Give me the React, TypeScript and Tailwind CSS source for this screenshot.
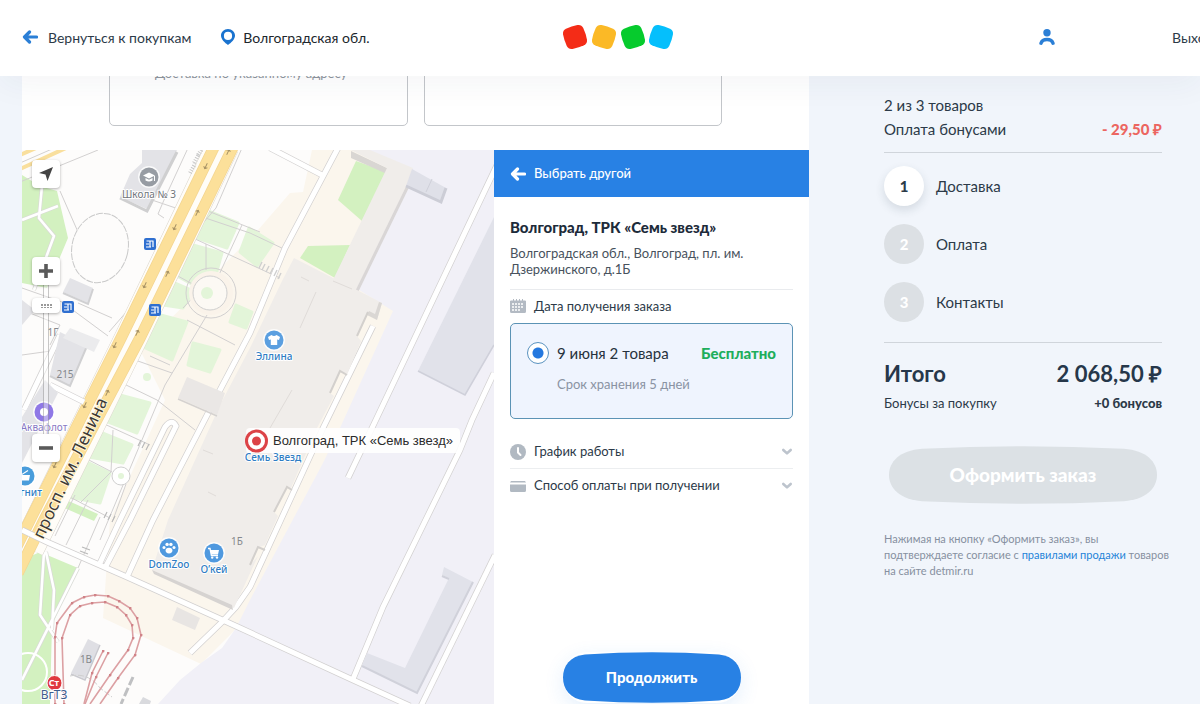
import { useState } from "react";
import type { ReactNode } from "react";

const BUILDING = "#f0edea";
const PARK = "#e3f5d9";
const GRASS = "#d3f1c0";
const BLOCK = "#e3e3e7";
const INDUSTRIAL = "#e1e2ea";

const logoTiles = [
  { x: 13, angle: -18, color: "#f42c17" },
  { x: 42, angle: 18, color: "#fbb926" },
  { x: 71, angle: -18, color: "#06cb2d" },
  { x: 99, angle: 18, color: "#05bffc" },
];

const parks = [
  "208,211 238,223 227,248 197,238",
  "249,228 273,243 257,266 240,252",
  "193,245 222,253 217,271 197,287 177,276",
  "170,281 193,291 183,308 163,305",
  "157,314 187,322 172,360 143,347",
  "193,343 220,350 210,372 188,365",
  "120,395 150,403 137,433 103,420",
  "95,430 132,445 123,463 83,456",
  "83,460 110,473 100,503 68,497",
  "236,305 252,312 246,328 230,322",
];

const roads = [
  "M497 165 L372 428 L348 478",
  "M494 373 L472 420 L460 450 L383 607 L353 679",
  "M495 555 L421 706",
  "M22 530 L47 542 L127 577 L227 622 L353 680 L410 706",
  "M338 148 L285 248 L250 333 L220 390 L153 520 L127 577",
  "M373 326 L323 428 L250 587 L236 607 L222 622 L190 653",
  "M100 563 L120 520 L165 427 Q172 418 176 426 L130 520 L106 566",
  "M270 148 L322 175",
  "M24 410 L60 335",
  "M50 385 L84 402",
];

const paths = [
  "M140 196 L250 233 L286 250",
  "M208 211 L260 232",
  "M193 238 L280 278",
  "M176 275 L198 287",
  "M183 308 L200 290",
  "M206 244 L206 270",
  "M218 277 L242 225",
  "M150 356 L170 365",
  "M135 360 L172 373",
  "M187 320 L235 345",
  "M122 383 L157 400 L195 430",
  "M207 315 L165 385 L100 540",
  "M100 422 L150 445",
  "M113 430 L111 472 L80 503",
  "M85 458 L112 472",
  "M66 495 L110 518",
  "M113 520 L126 484",
  "M188 148 L164 200 L158 214 L164 218",
  "M242 148 L216 208 L109 332",
  "M60 191 L78 232",
  "M22 288 L62 302 L108 336",
  "M22 310 L60 325 L50 345",
  "M78 303 L112 318",
  "M66 545 L88 500",
  "M55 536 L75 495",
  "M78 568 L100 517",
  "M22 355 L58 350",
];

const tramTracks = [
  "M55 704 L55 637 L57 623 L72 603 L84 597 L95 595 L108 596 L119 601 L130 608 L137 618 L141 635 L135 655 L118 678 L100 704",
  "M64 704 L62 638 L70 615 L80 606 L92 603 L105 602 L117 607 L126 615 L132 625 L133 638 L128 650 L110 675 L90 704",
  "M108 653 L96 677 L85 704",
  "M103 651 L92 673 L84 704",
];

const stops = [
  [150, 244],
  [68, 307],
  [155, 310],
];

const arrows = [
  [206, 166],
  [228, 152],
  [175, 227],
  [197, 213],
  [145, 285],
  [167, 274],
  [115, 345],
  [137, 333],
  [85, 405],
  [107, 393],
  [55, 465],
];

function ArrowLeft({ className }: { className: string }) {
  return (
    <svg viewBox="0 0 16 14" className={className} aria-hidden="true">
      <path
        d="M7.5 2 L2.5 7 L7.5 12 M3 7 H14.5"
        fill="none"
        stroke="currentColor"
        strokeWidth="3.2"
        strokeLinecap="round"
        strokeLinejoin="round"
      />
    </svg>
  );
}

function Chevron() {
  return (
    <svg viewBox="0 0 12 8" className="h-2 w-3 shrink-0" aria-hidden="true">
      <path
        d="M2.3 2 L6 5.4 L9.7 2"
        fill="none"
        stroke="#bdc4cd"
        strokeWidth="2.6"
        strokeLinecap="round"
        strokeLinejoin="round"
      />
    </svg>
  );
}

// Soft squircle that sits behind the label of the big buttons
function PillShape({ color }: { color: string }) {
  return (
    <svg
      viewBox="0 0 178 51"
      preserveAspectRatio="none"
      className="absolute inset-0 h-full w-full"
      aria-hidden="true"
    >
      <path
        d="M22 2.5 Q89 -2 156 2.5 C171 4 178 14 178 25.5 C178 37 171 47 156 48.5 Q89 53 22 48.5 C7 47 0 37 0 25.5 C0 14 7 4 22 2.5 Z"
        fill={color}
      />
    </svg>
  );
}

function MapPoint({
  x,
  y,
  color,
  children,
}: {
  x: number;
  y: number;
  color: string;
  children: ReactNode;
}) {
  return (
    <g transform={`translate(${x} ${y})`}>
      <circle r="11" fill="#fff" opacity="0.8" />
      <circle r="9.5" fill={color} />
      {children}
    </g>
  );
}

function CityMap() {
  return (
    <svg
      viewBox="22 150 472 554"
      preserveAspectRatio="xMinYMin slice"
      className="absolute inset-0 h-full w-full font-['Noto_Sans',sans-serif]"
      role="img"
      aria-label="Карта"
    >
      <defs>
        <marker
          id="tram-stop"
          viewBox="0 0 4 4"
          refX="2"
          refY="2"
          markerWidth="3"
          markerHeight="3"
          markerUnits="userSpaceOnUse"
        >
          <circle cx="2" cy="2" r="2" fill="#d08388" />
        </marker>
      </defs>

      <rect x="22" y="150" width="472" height="554" fill="#fdfcfb" />
      <polygon
        points="312,150 303,192 290,193 258,230 140,350 165,400 110,520 103,618 201,664 262,603 400,320 400,150"
        fill="#fbf6ed"
      />
      <polygon
        points="366,150 494,150 494,704 158,704 180,680 201,663 222,648 236,628 250,600 323,463 340,428 393,311 356,288 407,184"
        fill="#f1f0f7"
      />

      {/* grass and parks */}
      <polygon points="22,175 40,186 57,191 68,238 47,288 22,283" fill={GRASS} />
      <polygon points="22,560 40,552 78,568 52,625 50,704 22,704" fill={GRASS} />
      <polygon points="356,161 387,172 362,221 338,200" fill={GRASS} />
      <polygon points="308,246 350,245 335,278 300,258" fill={GRASS} />
      <polygon points="64,499 98,514 94,521 60,506" fill={GRASS} />
      {parks.map((points) => (
        <polygon
          key={points}
          points={points}
          fill={PARK}
          stroke={PARK}
          strokeWidth="3"
          strokeLinejoin="round"
        />
      ))}
      <path
        d="M42 186 L39 218 L54 236 L34 290 M22 220 L58 206 M44 552 L40 615 L58 642 M46 552 L54 590 L52 630 M22 680 L78 568"
        fill="none"
        stroke="#d9dad6"
        strokeWidth="4"
      />
      <path
        d="M42 186 L39 218 L54 236 L34 290 M22 220 L58 206 M44 552 L40 615 L58 642 M46 552 L54 590 L52 630 M22 680 L78 568"
        fill="none"
        stroke="#fff"
        strokeWidth="2.6"
      />
      <circle cx="28" cy="672" r="19" fill="none" stroke="#fff" strokeWidth="2" />

      {/* small streets */}
      {paths.map((d) => (
        <path key={d} d={d} fill="none" stroke="#d2d0d0" strokeWidth="1" />
      ))}
      <ellipse
        cx="100"
        cy="248"
        rx="28"
        ry="35"
        transform="rotate(14 100 248)"
        fill="#fdfcfb"
        stroke="#c9c9c9"
        strokeDasharray="7 1"
      />
      <circle cx="211" cy="293" r="25" fill="none" stroke="#d2d0d0" />
      <circle cx="211" cy="293" r="22" fill="#faf3ea" />
      <circle cx="210" cy="293" r="17" fill="#fcf9f4" stroke="#cfcfcf" />
      <circle cx="207" cy="293" r="6" fill={PARK} />
      <circle cx="147" cy="377" r="4" fill={PARK} />
      <circle cx="121" cy="476" r="9" fill="#fff" stroke="#cfcfcf" />
      <circle cx="121" cy="476" r="3" fill={PARK} />

      {/* avenue */}
      <path d="M223 145 L131 338 L28 548" fill="none" stroke="#d9d4cb" strokeWidth="33" />
      <path d="M223 145 L131 338 L28 548" fill="none" stroke="#fffdf8" strokeWidth="32" />
      <path
        d="M215 145 L121 338 L30 520 L14 552 M234 145 L140 338 L44 520 L18 573"
        fill="none"
        stroke="#f3d591"
        strokeWidth="11.5"
      />
      <path
        d="M215 145 L121 338 L30 520 L14 552 M234 145 L140 338 L44 520 L18 573"
        fill="none"
        stroke="#fce09a"
        strokeWidth="10"
      />
      <path d="M20 155 L36 148 M20 169 L66 148" fill="none" stroke="#f9df9d" strokeWidth="4" />
      <path d="M20 163 L52 149 M20 182 L98 150" fill="none" stroke="#d2d0d0" />
      {arrows.map(([x, y], i) => (
        <path
          key={`${x}-${y}`}
          d="M-3 0 H3 M1 -2 L3 0 L1 2"
          transform={`translate(${x} ${y}) rotate(${i % 2 ? -64 : 116})`}
          fill="none"
          stroke="#a18d62"
          strokeWidth="0.9"
        />
      ))}

      {/* roads: casing first, then the surface */}
      {roads.map((d) => (
        <path key={d} d={d} fill="none" stroke="#d2d0d0" strokeWidth="6.4" />
      ))}
      {roads.map((d) => (
        <path key={d} d={d} fill="none" stroke="#fff" strokeWidth="5" />
      ))}

      {/* buildings */}
      <polygon points="351,151 387,168 387,174 351,158" fill="#d9d6d3" />
      <polygon
        points="351,150 387,168 333,280 357,291 408,186 413,168 370,150"
        fill={BUILDING}
      />
      <path d="M357 291 L408 186" stroke="#d9d6d6" strokeWidth="3" />
      <polygon
        points="294,258 333,278 357,290 382,303 377,320 367,313 357,336 361,341 347,375 340,370 330,393 334,396 317,428 291,488 286,487 274,512 278,516 265,545 257,548 250,565 258,556 234,608 152,570 168,520 220,405 250,348 282,281"
        fill={BUILDING}
      />
      <polygon points="152,570 232,605 233,610 154,574" fill="#d6d3d1" />
      <polygon points="382,303 377,320 367,315 369,311 375,314 379,302" fill="#dad7d4" />
      <path
        d="M357 336 L368 312 M330 393 L340 371 L347 375 M274 512 L287 487 L292 490 M250 565 L258 547 L265 550"
        fill="none"
        stroke="#d3d0cd"
        strokeWidth="2"
      />
      <path
        d="M333 281 L352 289 M301 277 L309 281 M316 292 L300 328 M203 450 L213 454 M216 496 L208 492 M292 390 L270 428"
        fill="none"
        stroke="#e0dcd9"
      />
      <path
        d="M259 268 l3 -6 M262 270 l3 -6 M266 272 l3 -6 M270 274 l3 -6 M274 276 l3 -6 M278 279 l3 -6"
        stroke="#cfcfcf"
        strokeWidth="1.4"
      />
      <polygon points="412,169 446,188 441,202 406,186" fill="#dfe0e8" />
      <path d="M406 186 L441 202 L446 188" fill="none" stroke="#cccdd6" strokeWidth="3" />
      <path d="M432 179 L426 192" stroke="#cfd0d9" />
      <polygon points="494,217 494,345 465,395 418,371" fill={INDUSTRIAL} />
      <path d="M418 371 L465 395 L494 345" fill="none" stroke="#cfd0da" strokeWidth="1.6" />
      <polygon
        points="444,567 473,582 417,693 362,665 367,653 405,668 449,578 442,575"
        fill={INDUSTRIAL}
      />
      <path
        d="M442 576 L449 579 M362 666 L417 693 L473 582"
        fill="none"
        stroke="#d0d1da"
        strokeWidth="2"
      />
      <polygon points="142,150 177,150 147,209 120,197 130,174 142,163" fill={BLOCK} />
      <path d="M120 198 L147 211 L177 152" fill="none" stroke="#cfcfd0" strokeWidth="3" />
      <polygon points="70,278 93,288 88,303 63,292" fill={BLOCK} />
      <path d="M63 293 L88 304 L93 289" fill="none" stroke="#d0d0d2" strokeWidth="2" />
      <polygon points="60,332 87,345 70,385 50,375" fill={BLOCK} />
      <path d="M50 376 L70 386 L87 346" fill="none" stroke="#d0d0d2" strokeWidth="2" />
      <polygon points="45,380 58,393 22,463 22,417" fill={BLOCK} />
      <polygon points="22,300 35,310 22,325" fill={BLOCK} />
      <polygon points="70,328 100,340 94,352 63,338" fill="#ebebed" />
      <polygon points="187,377 225,393 217,415 178,398" fill="#eae7e5" />
      <path d="M178 399 L217 416" stroke="#d5d2d0" strokeWidth="1.4" />
      <polygon points="88,639 100,645 85,679 71,673" fill="#dfdfe4" />
      <path d="M71 674 L85 680 L100 645" fill="none" stroke="#c9c9cf" strokeWidth="1.4" />
      <polygon points="177,607 200,618 195,630 172,620" fill="#e8e5e3" />
      <polygon points="143,697 151,701 150,704 139,704" fill="#d9dade" />
      <path d="M133 677 L121 704" stroke="#bfc0c2" strokeWidth="3" strokeDasharray="9 3" />
      <path d="M70 676 Q88 672 100 688 L112 697" fill="none" stroke="#cfcfcf" strokeDasharray="6 2" />
      <path
        d="M190 173 l5 -9 M194 163 l5 -9 M198 155 l4 -6"
        stroke="#c8c8c8"
        strokeWidth="4"
        strokeDasharray="1 1.5"
      />
      <path
        d="M138 446 l3 -6 M142 448 l3 -6 M146 450 l3 -6 M104 518 l3 -6 M108 520 l3 -6 M112 522 l3 -6 M80 551 l8 3 M82 547 l8 3"
        stroke="#b9b9b9"
        strokeWidth="1.2"
      />

      {tramTracks.map((d) => (
        <path
          key={d}
          d={d}
          fill="none"
          stroke="#dca0a3"
          strokeWidth="1.6"
          markerStart="url(#tram-stop)"
          markerMid="url(#tram-stop)"
        />
      ))}

      {stops.map(([x, y]) => (
        <g key={`${x}-${y}`} transform={`translate(${x} ${y})`}>
          <rect x="-6" y="-6" width="12" height="12" rx="2" fill="#2f6fd0" />
          <path
            d="M-3.5 -3 H3.5 M0 -3 V3 M3 -3 V3 M-4 0 H-1 M-4 3 H1"
            fill="none"
            stroke="#fff"
            strokeWidth="1.2"
          />
        </g>
      ))}

      <MapPoint x={149} y={177} color="#979ca3">
        <path d="M-6 -1.5 L0 -4.5 L6 -1.5 L0 1.5 Z" fill="#fff" />
        <path d="M-3.5 1 V3.5 Q0 5.5 3.5 3.5 V1 L0 2.8 Z M5 -1 h1 v5 h-1 Z" fill="#fff" />
      </MapPoint>
      <MapPoint x={274} y={340} color="#5b9fe0">
        <path
          d="M-2.5 -5 Q0 -3 2.5 -5 L6 -3 L5 0 L3.2 -0.4 V5 H-3.2 V-0.4 L-5 0 L-6 -3 Z"
          fill="#fff"
        />
      </MapPoint>
      <MapPoint x={169} y={548} color="#4f99df">
        <ellipse cx="0" cy="2.6" rx="3.4" ry="2.8" fill="#fff" />
        <circle cx="-5" cy="-0.5" r="1.5" fill="#fff" />
        <circle cx="-1.9" cy="-3.6" r="1.7" fill="#fff" />
        <circle cx="1.9" cy="-3.6" r="1.7" fill="#fff" />
        <circle cx="5" cy="-0.5" r="1.5" fill="#fff" />
      </MapPoint>
      <MapPoint x={214} y={553} color="#4f99df">
        <path d="M-6 -4.5 H-4 L-2.6 2.5 H4" fill="none" stroke="#fff" strokeWidth="1.3" />
        <path d="M-3.6 -3 H5 L4 1.4 H-2.8 Z" fill="#fff" />
        <circle cx="-1.8" cy="4.6" r="1.2" fill="#fff" />
        <circle cx="3" cy="4.6" r="1.2" fill="#fff" />
      </MapPoint>
      <MapPoint x={44} y={412} color="#8f78e6">
        <circle r="4" fill="#fff" />
      </MapPoint>
      <MapPoint x={25} y={476} color="#4a9ddb">
        <path d="M-5 -1 H5 L4 4.5 H-4 Z" fill="#fff" />
        <path d="M-4 -1 L3 -5.5 M1 1 V3.5 M-1.5 1 V3.5" stroke="#fff" strokeWidth="1.2" />
      </MapPoint>
      <circle cx="54.500" cy="683" r="7.5" fill="#e0393f" stroke="#fff" />
      <text x="54" y="686" fontSize="9" fontWeight="700" fill="#fff" textAnchor="middle">
        Ст
      </text>

      <g stroke="#fff" strokeWidth="2" strokeLinejoin="round" paintOrder="stroke" textAnchor="middle">
        <text x="149" y="198" fontSize="10" fill="#6f747a">
          Школа № 3
        </text>
        <g fontSize="10" fontWeight="500" fill="#2f7dc4">
          <text x="274" y="360">Эллина</text>
          <text x="273" y="461">Семь Звезд</text>
          <text x="169" y="568">DomZoo</text>
          <text x="214" y="573">О’кей</text>
          <text x="31" y="496">гнит</text>
        </g>
        <text x="44" y="431" fontSize="10" fill="#8878c4">
          Аквафлот
        </text>
        <text x="54" y="699" fontSize="12" fill="#3f5d8c">
          ВгТЗ
        </text>
      </g>
      <g fontSize="10" fill="#85888c" textAnchor="middle">
        <text x="237" y="545">1Б</text>
        <text x="86" y="663">1В</text>
        <text x="65" y="378">215</text>
        <text x="53" y="336">1Г</text>
      </g>
      <text
        transform="translate(43 540) rotate(-65)"
        fontSize="17"
        fill="#3d3a36"
        stroke="#fff6dd"
        strokeWidth="2"
        paintOrder="stroke"
      >
        просп. им. Ленина
      </text>

      {/* selected pickup point */}
      <rect x="246" y="428" width="214" height="25" rx="4" fill="#fff" opacity="0.88" />
      <circle cx="256.500" cy="441" r="11.500" fill="#dc4347" />
      <circle cx="256.500" cy="441" r="8.500" fill="#fff" />
      <circle cx="256.500" cy="441" r="4.500" fill="#dc4347" />
      <text
        x="273"
        y="445"
        fontSize="13"
        fill="#2b2b2b"
        className="font-['Liberation_Sans',sans-serif]"
      >
        Волгоград, ТРК «Семь звезд»
      </text>
    </svg>
  );
}

function MapControls() {
  const [zoom, setZoom] = useState(90);
  const button =
    "grid size-7 place-items-center rounded-sm bg-white shadow-[0_1px_3px_rgba(0,0,0,0.3)]";

  return (
    <div className="absolute top-2.5 left-2.5 flex flex-col items-center">
      <button type="button" aria-label="Моё местоположение" className={button}>
        <svg viewBox="0 0 14 14" className="size-3.5">
          <path d="M14 0 L8.500 14 L6.500 7.500 L0 6 Z" fill="#444" />
        </svg>
      </button>
      <button
        type="button"
        aria-label="Приблизить"
        className={`${button} relative z-10 mt-[69px]`}
        onClick={() => setZoom(Math.min(100, zoom + 10))}
      >
        <svg viewBox="0 0 14 14" className="size-3.5">
          <path d="M7 0 V14 M0 7 H14" stroke="#5a5a5a" strokeWidth="3.600" />
        </svg>
      </button>
      <input
        type="range"
        aria-label="Масштаб"
        min={0}
        max={100}
        value={zoom}
        onChange={(e) => setZoom(Number(e.target.value))}
        className="h-[149px] w-7 appearance-none bg-[linear-gradient(90deg,transparent_11px,#9998_11px,#9998_12px,#fff6_12px,#fff6_16px,#9998_16px,#9998_17px,transparent_17px)] [direction:rtl] [writing-mode:vertical-lr] [&::-webkit-slider-thumb]:h-[15px] [&::-webkit-slider-thumb]:w-7 [&::-webkit-slider-thumb]:appearance-none [&::-webkit-slider-thumb]:rounded-sm [&::-webkit-slider-thumb]:bg-white [&::-webkit-slider-thumb]:bg-[image:linear-gradient(90deg,#fff_9px,transparent_9px,transparent_20px,#fff_20px),linear-gradient(#fff_5px,transparent_5px,transparent_10px,#fff_10px),radial-gradient(circle_at_1px_1px,#999_1px,transparent_1px)] [&::-webkit-slider-thumb]:bg-[size:auto,auto,3px_3px] [&::-webkit-slider-thumb]:shadow-[0_1px_3px_rgba(0,0,0,0.3)]"
      />
      <button
        type="button"
        aria-label="Отдалить"
        className={button}
        onClick={() => setZoom(Math.max(0, zoom - 10))}
      >
        <svg viewBox="0 0 14 14" className="size-3.5">
          <path d="M0 7 H14" stroke="#5a5a5a" strokeWidth="3.600" />
        </svg>
      </button>
    </div>
  );
}

function Header() {
  return (
    <header className="relative z-20 overflow-x-clip bg-white shadow-[0_8px_32px_rgba(38,56,74,0.05)]">
      <div className="grid h-19 min-w-[1236px] grid-cols-3 items-center px-[22px] pb-0.5 text-[14px]">
        <nav className="flex items-center gap-[30px] whitespace-nowrap">
          <a href="#catalog" className="flex items-center gap-2.5">
            <ArrowLeft className="h-3.5 w-4 text-[#2b7fd6]" />
            Вернуться к покупкам
          </a>
          <button type="button" className="flex items-center gap-2 text-[#20262c]">
            <svg viewBox="0 0 14 16" className="h-4 w-3.5" aria-hidden="true">
              <path
                d="M7 0 C11 0 14 3 14 6.600 C14 10.500 10 14 7 16 C4 14 0 10.500 0 6.600 C0 3 3 0 7 0 Z M7 2.800 A4.100 4.100 0 0 0 7 11 A4.100 4.100 0 0 0 7 2.800 Z"
                fill="#1a73cf"
                fillRule="evenodd"
              />
            </svg>
            Волгоградская обл.
          </button>
        </nav>
        <a href="#home" aria-label="Детский мир" className="justify-self-center">
          <svg viewBox="0 0 112 28" className="h-7 w-28">
            {logoTiles.map((tile) => (
              <path
                key={tile.x}
                d="M-6 -10.600 Q0 -11.400 6 -10.600 Q10 -10 10.600 -6 Q11.400 0 10.600 6 Q10 10 6 10.600 Q0 11.400 -6 10.600 Q-10 10 -10.600 6 Q-11.400 0 -10.600 -6 Q-10 -10 -6 -10.600 Z"
                transform={`translate(${tile.x} 14) rotate(${tile.angle})`}
                fill={tile.color}
              />
            ))}
          </svg>
        </a>
        <div className="flex items-center justify-end gap-[117px]">
          <a href="#profile" aria-label="Профиль">
            <svg viewBox="0 0 16 16" className="size-4">
              <circle cx="8" cy="3.800" r="3.700" fill="#2b7fd6" />
              <path
                d="M2 14.200 C3.500 9.300 12.500 9.300 14 14.200"
                fill="none"
                stroke="#2b7fd6"
                strokeWidth="3.400"
                strokeLinecap="round"
              />
            </svg>
          </a>
          <a href="#logout">Выход</a>
        </div>
      </div>
    </header>
  );
}

function PickupPanel() {
  return (
    <section className="flex w-[315px] shrink-0 flex-col bg-white">
      <button
        type="button"
        className="flex h-[47px] shrink-0 items-center gap-2 bg-[#2881e4] px-4 text-[13px] font-medium text-white"
      >
        <ArrowLeft className="h-3.5 w-4" />
        Выбрать другой
      </button>
      <div className="flex flex-1 flex-col px-4 pt-5 text-[13px]">
        <h2 className="text-[15px] leading-5 font-black text-[#1d2b3a]">
          Волгоград, ТРК «Семь звезд»
        </h2>
        <p className="mt-2 leading-4 text-[#48525d]">
          Волгоградская обл., Волгоград, пл. им. Дзержинского, д.1Б
        </p>
        <hr className="mt-3 border-[#e9ebee]" />
        <fieldset className="mt-2">
          <legend className="flex items-center gap-2 leading-4">
            <svg viewBox="0 0 16 14" className="h-3.5 w-4" aria-hidden="true">
              <path
                d="M1.500 1.500 H14.500 A1.200 1.200 0 0 1 16 3 V12.500 A1.500 1.500 0 0 1 14.500 14 H1.500 A1.500 1.500 0 0 1 0 12.500 V3 A1.200 1.200 0 0 1 1.500 1.500 Z M3 0 h1 v2 h-1 Z M6 0 h1 v2 h-1 Z M9 0 h1 v2 h-1 Z M12 0 h1 v2 h-1 Z"
                fill="#b3bac3"
              />
              <path
                d="M2 5 H14 M2 8 H14 M2 11 H11"
                stroke="#fff"
                strokeWidth="1.400"
                strokeDasharray="2 1"
              />
            </svg>
            Дата получения заказа
          </legend>
          <label className="mt-[9px] flex h-24 gap-2 rounded-[5px] border border-[#5b93b5] bg-[#eff4fe] px-4 pt-[18px]">
            <input
              type="radio"
              name="pickup-date"
              defaultChecked
              className="size-[22px] shrink-0 appearance-none rounded-full border border-[#5b93c0] bg-[radial-gradient(circle,#2478df_5px,#fff_6px)]"
            />
            <span className="flex flex-1 flex-col gap-[9px]">
              <span className="flex justify-between text-[15px] leading-[22px]">
                <span className="text-[#26323d]">9 июня 2 товара</span>
                <b className="font-black text-[#1eae5c]">Бесплатно</b>
              </span>
              <span className="leading-[22px] text-[#8a93a3]">Срок хранения 5 дней</span>
            </span>
          </label>
        </fieldset>
        <button
          type="button"
          className="mt-4 flex h-[34px] items-center gap-2 border-b border-[#eceef0] text-left"
        >
          <svg viewBox="0 0 16 16" className="size-4" aria-hidden="true">
            <circle cx="8" cy="8" r="8" fill="#b1b9c2" />
            <path
              d="M8 4 V8.500 L10.500 11"
              fill="none"
              stroke="#fff"
              strokeWidth="2"
              strokeLinecap="round"
            />
          </svg>
          <span className="flex-1">График работы</span>
          <Chevron />
        </button>
        <button type="button" className="flex h-[34px] items-center gap-2 text-left">
          <svg viewBox="0 0 16 12" className="h-3 w-4" aria-hidden="true">
            <path
              d="M1 1 H15 L16 2.500 H0 Z M0 4.500 H16 V10.500 Q16 12 14.500 12 H1.500 Q0 12 0 10.500 Z"
              fill="#b1b9c2"
            />
          </svg>
          <span className="flex-1">Способ оплаты при получении</span>
          <Chevron />
        </button>
        <button
          type="button"
          className="relative mx-auto mt-auto mb-px h-[51px] w-[178px] rounded-3xl text-[15px] font-black text-white shadow-[0_6px_20px_rgba(40,129,228,0.12)]"
        >
          <PillShape color="#2881e4" />
          <span className="relative">Продолжить</span>
        </button>
      </div>
    </section>
  );
}

const steps = ["Доставка", "Оплата", "Контакты"];

function OrderSummary() {
  return (
    <aside className="mr-[38px] ml-[75px] w-[278px] shrink-0 pt-[17px]">
      <p className="leading-6">2 из 3 товаров</p>
      <p className="flex justify-between leading-6">
        Оплата бонусами
        <b className="font-black text-[#ec6560]">- 29,50 ₽</b>
      </p>
      <hr className="mt-[11px] border-[#d0d5db]" />
      <ol className="mt-[13px] flex flex-col gap-[18px]">
        {steps.map((step, i) => (
          <li key={step} className="flex items-center gap-3">
            <span
              className={
                i === 0
                  ? "grid size-10 place-items-center rounded-full bg-white font-black shadow-[0_4px_10px_rgba(38,56,74,0.14)]"
                  : "grid size-10 place-items-center rounded-full bg-[#dce0e4] font-black text-white"
              }
            >
              {i + 1}
            </span>
            {step}
          </li>
        ))}
      </ol>
      <hr className="mt-5 border-[#d0d5db]" />
      <p className="mt-[15px] flex justify-between text-[22px] leading-8 font-bold text-[#26374a]">
        Итого <span>2 068,50 ₽</span>
      </p>
      <p className="mt-[3px] flex justify-between text-[13px] leading-5">
        Бонусы за покупку <b className="font-black">+0 бонусов</b>
      </p>
      <button
        type="button"
        disabled
        className="relative mx-auto mt-[33px] block h-[58px] w-[268px] text-[19px] font-black text-white"
      >
        <PillShape color="#dce1e5" />
        <span className="relative">Оформить заказ</span>
      </button>
      <p className="-mr-5 mt-[27px] text-[11px] leading-4 text-[#8690a0]">
        Нажимая на кнопку «Оформить заказ», вы
        <br />
        подтверждаете согласие с{" "}
        <a href="#rules" className="text-[#2383d8]">
          правилами продажи
        </a>{" "}
        товаров
        <br />
        на сайте detmir.ru
      </p>
    </aside>
  );
}

export default function App() {
  return (
    <div className="flex min-h-screen flex-col overflow-x-clip bg-[#f1f5fb] font-[Lato,sans-serif] text-[15px] text-[#2c3a48]">
      <Header />
      <div className="flex flex-1">
        <main className="ml-[22px] flex flex-1 flex-col bg-white">
          <div className="grid h-[74px] grid-cols-2 content-end gap-4 overflow-hidden px-[87px] pb-6">
            <div className="flex h-30 items-end rounded-[5px] border border-[#c3c6ca] px-[45px] pb-[42px] text-[13px] leading-5 whitespace-nowrap text-[#8e959d]">
              Доставка по указанному адресу
            </div>
            <div className="h-30 rounded-[5px] border border-[#c3c6ca]" />
          </div>
          <div className="flex flex-1">
            <div className="relative flex-1 overflow-hidden">
              <CityMap />
              <MapControls />
            </div>
            <PickupPanel />
          </div>
        </main>
        <OrderSummary />
      </div>
    </div>
  );
}
